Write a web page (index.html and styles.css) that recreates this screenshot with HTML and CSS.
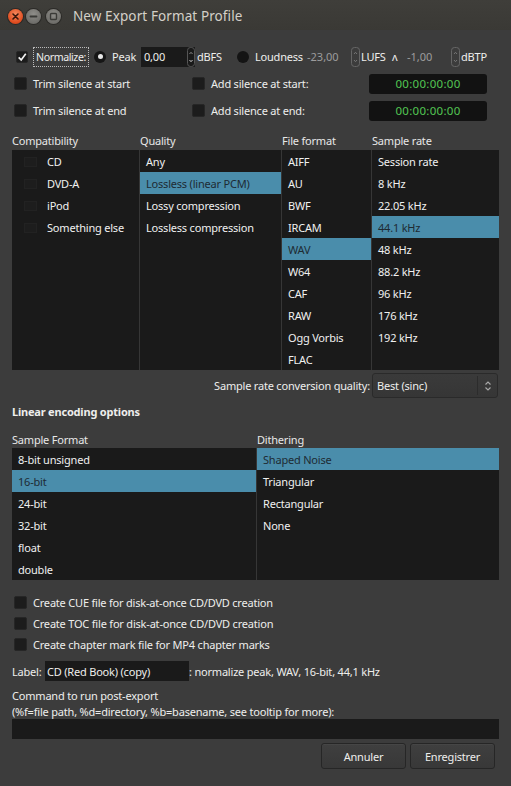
FILE: index.html
```html
<!DOCTYPE html>
<html>
<head>
<meta charset="utf-8">
<title>New Export Format Profile</title>
<link rel="stylesheet" href="styles.css">
</head>
<body>
<div class="window">
  <div class="titlebar">
    <span class="wbtn close"><svg width="15" height="15" viewBox="0 0 15 15"><path d="M5 5 L10 10 M10 5 L5 10" stroke="#3a160a" stroke-width="1.6" stroke-linecap="round"/></svg></span>
    <span class="wbtn minb"><svg width="15" height="15" viewBox="0 0 15 15"><path d="M4.5 7.5 H10.5" stroke="#3a3a37" stroke-width="1.8" stroke-linecap="round"/></svg></span>
    <span class="wbtn maxb"><svg width="15" height="15" viewBox="0 0 15 15"><rect x="4.5" y="4.5" width="6" height="6" rx="1" fill="none" stroke="#3a3a37" stroke-width="1.4"/></svg></span>
    <span class="title">New Export Format Profile</span>
  </div>

  <div class="content">
    <div class="opts">
      <div class="row1">
        <span class="chk checked"><svg width="12" height="12" viewBox="0 0 12 12"><path d="M2 6.5 L5 9.5 L10.5 2" fill="none" stroke="#f2f2f2" stroke-width="2"/></svg></span>
        <span class="focus">Normalize:</span>
        <span class="radio on"></span>
        <span class="w lbl-peak">Peak</span>
        <span class="entry">0,00<span class="spin in"><svg width="8" height="20" viewBox="0 0 8 20"><rect x="0.5" y="0.5" width="7" height="19" rx="3" fill="none" stroke="#555"/><path d="M2.5 7 L4 5.3 L5.5 7" fill="none" stroke="#888"/><path d="M2.5 13 L4 14.7 L5.5 13" fill="none" stroke="#ccc"/></svg></span></span>
        <span class="w lbl-dbfs">dBFS</span>
        <span class="radio off"></span>
        <span class="w lbl-loud">Loudness</span>
        <span class="w dim v1">-23,00</span>
        <span class="w spin s1"><svg width="9" height="20" viewBox="0 0 9 20"><rect x="0.5" y="0.5" width="8" height="19" rx="3" fill="none" stroke="#666"/><path d="M3 7 L4.5 5.3 L6 7" fill="none" stroke="#777"/><path d="M3 13 L4.5 14.7 L6 13" fill="none" stroke="#777"/></svg></span>
        <span class="w lbl-lufs">LUFS</span>
        <span class="w caret">ʌ</span>
        <span class="w dim v2">-1,00</span>
        <span class="w spin s2"><svg width="9" height="20" viewBox="0 0 9 20"><rect x="0.5" y="0.5" width="8" height="19" rx="3" fill="none" stroke="#666"/><path d="M3 7 L4.5 5.3 L6 7" fill="none" stroke="#777"/><path d="M3 13 L4.5 14.7 L6 13" fill="none" stroke="#777"/></svg></span>
        <span class="w lbl-dbtp">dBTP</span>
      </div>
      <div class="row2">
        <div class="cell-a"><span class="chk"></span><span class="clabel">Trim silence at start</span></div>
        <div class="cell-b"><span class="chk"></span><span class="clabel">Add silence at start:</span></div>
        <div class="clock">00:00:00:00</div>
      </div>
      <div class="row2">
        <div class="cell-a"><span class="chk"></span><span class="clabel">Trim silence at end</span></div>
        <div class="cell-b"><span class="chk"></span><span class="clabel">Add silence at end:</span></div>
        <div class="clock">00:00:00:00</div>
      </div>
    </div>

    <div class="formats">
      <div class="hdr c-compat">Compatibility</div>
      <div class="hdr c-qual">Quality</div>
      <div class="hdr c-file">File format</div>
      <div class="hdr c-rate">Sample rate</div>

      <div class="list c-compat sep">
        <div class="item compat"><span class="tick"></span>CD</div>
        <div class="item compat"><span class="tick"></span>DVD-A</div>
        <div class="item compat"><span class="tick"></span>iPod</div>
        <div class="item compat"><span class="tick"></span>Something else</div>
      </div>
      <div class="list c-qual sep">
        <div class="item">Any</div>
        <div class="item sel">Lossless (linear PCM)</div>
        <div class="item">Lossy compression</div>
        <div class="item">Lossless compression</div>
      </div>
      <div class="list c-file sep">
        <div class="item">AIFF</div>
        <div class="item">AU</div>
        <div class="item">BWF</div>
        <div class="item">IRCAM</div>
        <div class="item sel">WAV</div>
        <div class="item">W64</div>
        <div class="item">CAF</div>
        <div class="item">RAW</div>
        <div class="item">Ogg Vorbis</div>
        <div class="item">FLAC</div>
      </div>
      <div class="list c-rate">
        <div class="item">Session rate</div>
        <div class="item">8 kHz</div>
        <div class="item">22.05 kHz</div>
        <div class="item sel">44.1 kHz</div>
        <div class="item">48 kHz</div>
        <div class="item">88.2 kHz</div>
        <div class="item">96 kHz</div>
        <div class="item">176 kHz</div>
        <div class="item">192 kHz</div>
      </div>
    </div>

    <div class="src-row">
      <span class="src-label">Sample rate conversion quality:</span>
      <div class="combo"><span class="combo-text">Best (sinc)</span><span class="combo-arrow"><svg width="8" height="12" viewBox="0 0 8 12"><path d="M1.5 4.5 L4 2 L6.5 4.5 M1.5 7.5 L4 10 L6.5 7.5" fill="none" stroke="#aaa" stroke-width="1.1"/></svg></span></div>
    </div>

    <div class="section">Linear encoding options</div>

    <div class="enc">
      <div class="hdr">Sample Format</div>
      <div class="hdr">Dithering</div>
      <div class="list sep">
        <div class="item">8-bit unsigned</div>
        <div class="item sel">16-bit</div>
        <div class="item">24-bit</div>
        <div class="item">32-bit</div>
        <div class="item">float</div>
        <div class="item">double</div>
      </div>
      <div class="list">
        <div class="item sel">Shaped Noise</div>
        <div class="item">Triangular</div>
        <div class="item">Rectangular</div>
        <div class="item">None</div>
      </div>
    </div>

    <div class="checks">
      <div class="crow"><span class="chk"></span><span class="clabel">Create CUE file for disk-at-once CD/DVD creation</span></div>
      <div class="crow"><span class="chk"></span><span class="clabel">Create TOC file for disk-at-once CD/DVD creation</span></div>
      <div class="crow"><span class="chk"></span><span class="clabel">Create chapter mark file for MP4 chapter marks</span></div>
    </div>

    <div class="label-row">
      <span class="lab">Label:</span>
      <span class="lab-input">CD (Red Book) (copy)</span>
      <span class="lab-desc">: normalize peak, WAV, 16-bit, 44,1 kHz</span>
    </div>

    <div class="cmd">
      <div class="cmd-line">Command to run post-export</div>
      <div class="cmd-line">(%f=file path, %d=directory, %b=basename, see tooltip for more):</div>
      <div class="cmd-input"></div>
    </div>

    <div class="buttons">
      <span class="btn">Annuler</span>
      <span class="btn">Enregistrer</span>
    </div>
  </div>
</div>
</body>
</html>
```

FILE: styles.css
```css
* { box-sizing: border-box; }
html, body { margin: 0; padding: 0; }
body {
  width: 511px;
  height: 786px;
  background: #3c3c3c;
  font-family: "Noto Sans", "Open Sans", sans-serif;
  font-size: 11px;
  letter-spacing: -0.2px;
  color: #eeeeec;
  overflow: hidden;
}
.window { width: 511px; height: 786px; background: #3c3c3c; }

/* title bar */
.titlebar {
  height: 30px;
  background: linear-gradient(#3f3e3a, #3a3935);
  display: flex;
  align-items: center;
  padding-left: 8px;
  padding-top: 2px;
}
.wbtn {
  width: 15px; height: 15px; border-radius: 50%;
  display: inline-flex;
  margin-right: 3px;
}
.wbtn svg { display: block; }
.close { background: radial-gradient(circle at 50% 35%, #f58a5e, #df4a1d 70%, #b83a12); box-shadow: 0 0 0 1px #2b2a27; }
.minb, .maxb { background: radial-gradient(circle at 50% 35%, #8f8e8a, #6f6e6a 70%, #5e5d59); box-shadow: 0 0 0 1px #2b2a27; }
.maxb { margin-left: 2px; }
.title {
  margin-left: 9px;
  font-size: 13.5px;
  color: #d4d0c8;
  letter-spacing: 0.1px;
}

.content { padding: 0 12px; }

/* options */
.opts { margin-top: 13px; }
.row1 { height: 27px; display: flex; align-items: center; white-space: nowrap; }
.row1 .w { flex: none; display: inline-flex; align-items: center; }
.chk {
  width: 13px; height: 13px;
  background: #1c1c1c;
  border: 1px solid #262626;
  border-radius: 2px;
  display: inline-flex; align-items: center; justify-content: center;
  flex: none;
}
.chk.checked { width: 12px; height: 12px; margin-left: 4px; }
.focus {
  margin-left: 5px;
  width: 56px;
  height: 20px;
  padding: 0 0 0 2px;
  border: 1px dotted #bbb;
  display: inline-flex; align-items: center;
  font-size: 10.6px;
  letter-spacing: -0.4px;
  flex: none;
}
.radio {
  width: 12px; height: 12px; border-radius: 50%;
  background: #161616; flex: none;
  display: inline-flex; align-items: center; justify-content: center;
}
.radio.on { margin-left: 5px; }
.radio.on::after { content: ""; width: 5px; height: 5px; border-radius: 50%; background: #e8e8e8; }
.lbl-peak { margin-left: 6px; width: 29px; }
.entry {
  width: 54px; height: 20px;
  background: #1a1a1a;
  display: inline-flex; align-items: center;
  padding-left: 3px;
  position: relative;
  flex: none;
}
.spin { display: inline-flex; }
.spin svg { display: block; }
.spin.in { position: absolute; right: 0; top: 0; }
.lbl-dbfs { margin-left: 2px; width: 40px; }
.radio.off { background: #141414; }
.lbl-loud { margin-left: 6px; width: 52px; }
.dim { color: #9c9c9c; letter-spacing: 0; }
.v1 { width: 44px; }
.s1 { width: 10px; }
.lbl-lufs { width: 31px; }
.caret { width: 15px; font-size: 11px; }
.v2 { width: 44px; }
.s2 { width: 10px; }

.row2 { height: 27px; display: flex; align-items: center; padding-left: 2px; }
.cell-a { width: 178px; display: flex; align-items: center; }
.cell-b { width: 177px; display: flex; align-items: center; }
.clabel { margin-left: 6px; }
.clock {
  width: 118px; height: 20px;
  background: #121212;
  border-radius: 3px;
  color: #53c653;
  font-size: 11.5px;
  display: flex; align-items: center; justify-content: center;
  letter-spacing: 0.3px;
}

/* format lists */
.formats {
  margin-top: 7px;
  display: grid;
  grid-template-columns: 128px 142px 90px 127px;
  grid-template-rows: 19px 220px;
}
.hdr { display: flex; align-items: center; color: #e8e8e8; }
.list { background: #1a1a1a; }
.list.sep { border-right: 1px solid #363636; }
.item {
  height: 22px;
  display: flex; align-items: center;
  padding-left: 6px;
  color: #f0f0f0;
  white-space: nowrap;
}
.item.sel { background: #4a8dab; color: #1e2b33; }
.item.compat { padding-left: 12px; }
.tick {
  width: 13px; height: 10px;
  background: #1d1d1d;
  border: 1px solid #222;
  margin-right: 10px;
  margin-top: 1px;
}

/* src quality */
.src-row { height: 29px; display: flex; align-items: center; justify-content: flex-end; padding-top: 2px; }
.src-label { margin-right: 2px; }
.combo {
  width: 126px; height: 25px;
  border: 1px solid #2a2a2a;
  border-radius: 3px;
  background: linear-gradient(#3a3a3a, #363636);
  display: flex; align-items: center;
  margin-right: 1px;
}
.combo-text { flex: 1; padding-left: 4px; }
.combo-arrow {
  width: 20px; height: 19px;
  border-left: 1px solid #2c2c2c;
  display: flex; align-items: center; justify-content: center;
}

.section { height: 24px; display: flex; align-items: center; font-weight: bold; }

.enc {
  margin-top: 7px;
  display: grid;
  grid-template-columns: 245px 242px;
  grid-template-rows: 18px 132px;
}

.checks { margin-top: 12px; }
.crow { height: 21px; display: flex; align-items: center; padding-left: 2px; }

.label-row { margin-top: 6px; height: 20px; display: flex; align-items: center; }
.lab { width: 33px; }
.lab-input {
  width: 144px; height: 20px;
  background: #1a1a1a;
  display: flex; align-items: center; padding-left: 2px;
}

.cmd { margin-top: 6px; }
.cmd-line { height: 16px; display: flex; align-items: center; }
.cmd-input { height: 20px; background: #1a1a1a; }

.buttons {
  margin-top: 4px;
  display: flex; justify-content: flex-end;
  gap: 4px;
  padding-right: 4px;
}
.btn {
  width: 85px; height: 26px;
  border: 1px solid #262626;
  border-radius: 3px;
  background: linear-gradient(#3f3f3f, #383838);
  display: flex; align-items: center; justify-content: center;
  box-shadow: inset 0 1px 0 rgba(255,255,255,0.04);
}
```
